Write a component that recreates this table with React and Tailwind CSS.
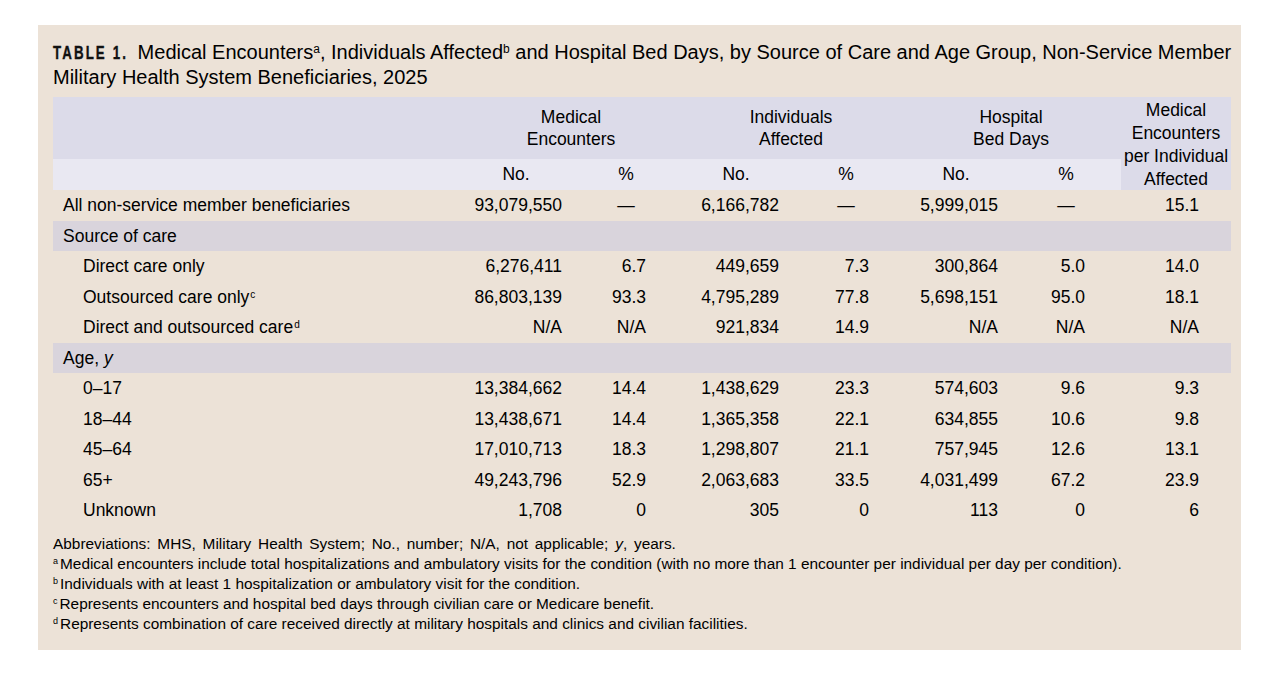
import React from 'react';

const rows = [
  { label: 'All non-service member beneficiaries', vals: ['93,079,550', '—', '6,166,782', '—', '5,999,015', '—', '15.1'] },
  { label: 'Source of care', section: true },
  { label: 'Direct care only', sub: true, vals: ['6,276,411', '6.7', '449,659', '7.3', '300,864', '5.0', '14.0'] },
  { label: 'Outsourced care only', note: 'c', sub: true, vals: ['86,803,139', '93.3', '4,795,289', '77.8', '5,698,151', '95.0', '18.1'] },
  { label: 'Direct and outsourced care', note: 'd', sub: true, vals: ['N/A', 'N/A', '921,834', '14.9', 'N/A', 'N/A', 'N/A'] },
  { label: 'Age, ', italic: 'y', section: true },
  { label: '0–17', sub: true, vals: ['13,384,662', '14.4', '1,438,629', '23.3', '574,603', '9.6', '9.3'] },
  { label: '18–44', sub: true, vals: ['13,438,671', '14.4', '1,365,358', '22.1', '634,855', '10.6', '9.8'] },
  { label: '45–64', sub: true, vals: ['17,010,713', '18.3', '1,298,807', '21.1', '757,945', '12.6', '13.1'] },
  { label: '65+', sub: true, vals: ['49,243,796', '52.9', '2,063,683', '33.5', '4,031,499', '67.2', '23.9'] },
  { label: 'Unknown', sub: true, vals: ['1,708', '0', '305', '0', '113', '0', '6'] },
];

// right padding per numeric column so figures line up like the print table
const padRight = ['pr-[9px]', 'pr-[35px]', 'pr-[12px]', 'pr-[32px]', 'pr-[13px]', 'pr-[36px]', 'pr-[32px]'];

const footnotes = [
  { mark: 'a', text: 'Medical encounters include total hospitalizations and ambulatory visits for the condition (with no more than 1 encounter per individual per day per condition).' },
  { mark: 'b', text: 'Individuals with at least 1 hospitalization or ambulatory visit for the condition.' },
  { mark: 'c', text: 'Represents encounters and hospital bed days through civilian care or Medicare benefit.' },
  { mark: 'd', text: 'Represents combination of care received directly at military hospitals and clinics and civilian facilities.' },
];

const Cell = ({ value, i }) => {
  if (value === '—') {
    return <div className="flex items-center justify-center">—</div>;
  }
  return <div className={`flex items-center justify-end ${padRight[i]}`}>{value}</div>;
};

export default function App() {
  return (
    <div className="min-h-screen bg-white pt-[25px] pl-[38px] font-['Liberation_Sans',Arial,sans-serif] text-black">
      <div className="w-[1203px] bg-[#ece2d7] pl-[15px] pr-[10px] pt-[15px] pb-[16px]">
        <h1 className="text-[20px] leading-[24px] whitespace-nowrap">
          <span className="inline-block origin-left scale-x-[0.7] mr-[-28px] font-bold tracking-[3px] text-[19px] text-[#111] [-webkit-text-stroke:0.4px_#111]">TABLE 1.</span>{' '}
          Medical Encounters<sup className="text-[12px]">a</sup>, Individuals Affected<sup className="text-[12px]">b</sup> and Hospital Bed Days, by Source of Care and Age Group, Non-Service Member
          <br />
          Military Health System Beneficiaries, 2025
        </h1>

        <div className="mt-[8px] text-[17.5px]">
          {/* header */}
          <div className="grid grid-cols-[408px_repeat(7,110px)] grid-rows-[62px_31px]">
            <div className="bg-[#dcdbe9]" />
            <div className="col-span-2 bg-[#dcdbe9] flex items-center justify-center text-center leading-[22px]">
              Medical<br />Encounters
            </div>
            <div className="col-span-2 bg-[#dcdbe9] flex items-center justify-center text-center leading-[22px]">
              Individuals<br />Affected
            </div>
            <div className="col-span-2 bg-[#dcdbe9] flex items-center justify-center text-center leading-[22px]">
              Hospital<br />Bed Days
            </div>
            <div className="row-span-2 bg-[#dcdbe9] flex items-center justify-center text-center leading-[23px] pt-[2px]">
              Medical<br />Encounters<br />per Individual<br />Affected
            </div>
            <div className="bg-[#e9e8f2]" />
            {['No.', '%', 'No.', '%', 'No.', '%'].map((h, i) => (
              <div key={i} className="bg-[#e9e8f2] flex items-center justify-center">{h}</div>
            ))}
          </div>

          {/* body */}
          {rows.map((r, ri) => (
            <div
              key={ri}
              className={`grid grid-cols-[408px_repeat(7,110px)] h-[30.5px] ${r.section ? 'bg-[#d9d4dc]' : ''}`}
            >
              <div className={`flex items-center ${r.sub ? 'pl-[30px]' : 'pl-[10px]'}`}>
                <span>
                  {r.label}
                  {r.italic && <i>{r.italic}</i>}
                  {r.note && <sup className="text-[10px] ml-[1px]">{r.note}</sup>}
                </span>
              </div>
              {r.vals && r.vals.map((v, i) => <Cell key={i} value={v} i={i} />)}
            </div>
          ))}

          {/* notes */}
          <div className="mt-[8px] text-[15.4px] leading-[20px]">
            <p className="[word-spacing:2.5px]">
              Abbreviations: MHS, Military Health System; No., number; N/A, not applicable; <i>y</i>, years.
            </p>
            {footnotes.map((f) => (
              <p key={f.mark}>
                <sup className="text-[9px] mr-[2px]">{f.mark}</sup>
                {f.text}
              </p>
            ))}
          </div>
        </div>
      </div>
    </div>
  );
}
